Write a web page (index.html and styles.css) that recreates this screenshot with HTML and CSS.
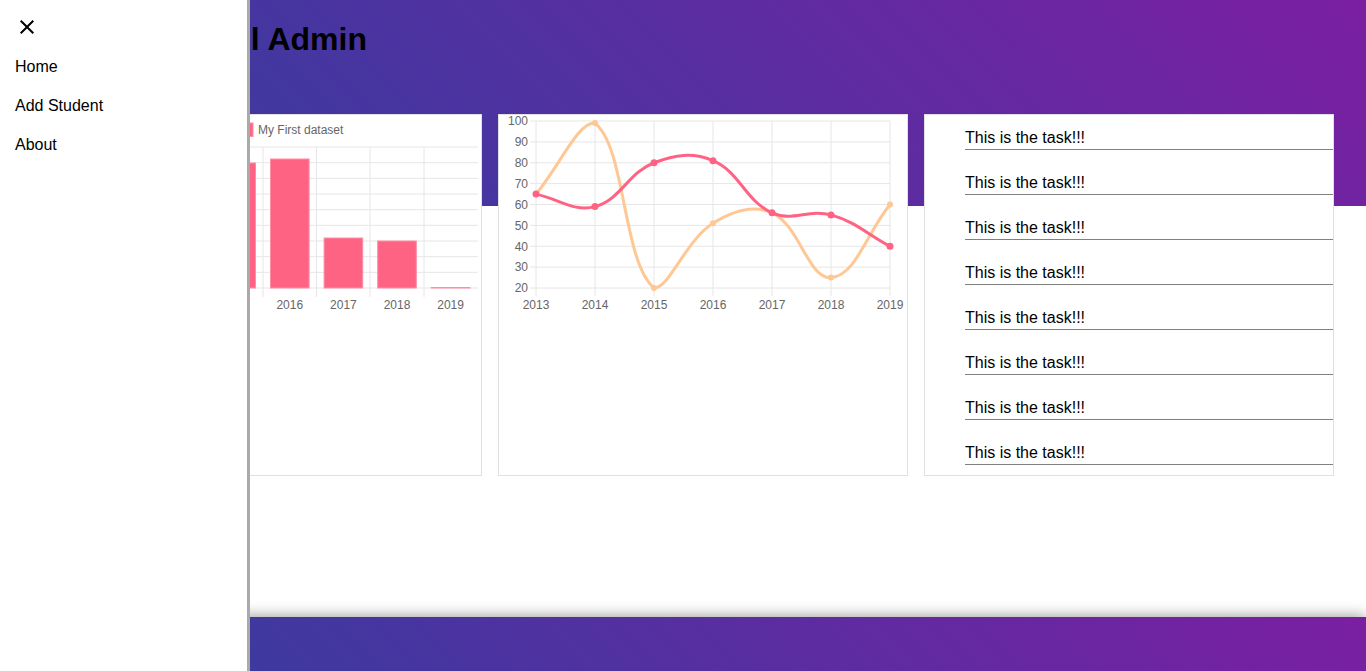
FILE: index.html
```html
<!DOCTYPE html>
<html lang="en">
<head>
<meta charset="utf-8">
<title>School Admin</title>
<link rel="stylesheet" href="styles.css">
</head>
<body>
<div class="app">
  <header class="topbar">
    <h1 class="title">School Admin</h1>
  </header>

  <main class="cards">
    <section class="card">
      <svg class="chart" viewBox="73 115 408 204" width="408" height="204">
        <g class="grid">
          <line x1="96" y1="147" x2="478" y2="147"/>
          <line x1="96" y1="162.67" x2="478" y2="162.67"/>
          <line x1="96" y1="178.33" x2="478" y2="178.33"/>
          <line x1="96" y1="194" x2="478" y2="194"/>
          <line x1="96" y1="209.67" x2="478" y2="209.67"/>
          <line x1="96" y1="225.33" x2="478" y2="225.33"/>
          <line x1="96" y1="241" x2="478" y2="241"/>
          <line x1="96" y1="256.67" x2="478" y2="256.67"/>
          <line x1="96" y1="272.33" x2="478" y2="272.33"/>
          <line x1="96" y1="288" x2="478" y2="288"/>
          <line x1="102.5" y1="147" x2="102.5" y2="297"/>
          <line x1="156" y1="147" x2="156" y2="297"/>
          <line x1="209.5" y1="147" x2="209.5" y2="297"/>
          <line x1="263" y1="147" x2="263" y2="297"/>
          <line x1="316.5" y1="147" x2="316.5" y2="297"/>
          <line x1="370" y1="147" x2="370" y2="297"/>
          <line x1="424" y1="147" x2="424" y2="297"/>
        </g>
        <g class="bars">
          <rect x="109.9" y="186" width="38.6" height="102"/>
          <rect x="163.5" y="195.5" width="38.6" height="92.5"/>
          <rect x="216.9" y="163" width="38.6" height="125"/>
          <rect x="270.5" y="159" width="38.6" height="129"/>
          <rect x="324.1" y="238" width="38.6" height="50"/>
          <rect x="377.7" y="241" width="38.6" height="47"/>
          <rect x="431.3" y="287.5" width="38.6" height="0.5"/>
        </g>
        <g class="tick">
          <text x="129" y="308.5" text-anchor="middle">2013</text>
          <text x="182.6" y="308.5" text-anchor="middle">2014</text>
          <text x="236.2" y="308.5" text-anchor="middle">2015</text>
          <text x="289.8" y="308.5" text-anchor="middle">2016</text>
          <text x="343.4" y="308.5" text-anchor="middle">2017</text>
          <text x="397" y="308.5" text-anchor="middle">2018</text>
          <text x="450.6" y="308.5" text-anchor="middle">2019</text>
        </g>
        <rect class="legend-box" x="213" y="123" width="40" height="13.5"/>
        <text class="tick" x="258" y="133.5">My First dataset</text>
      </svg>
    </section>

    <section class="card">
      <svg class="chart" viewBox="499 115 408 204" width="408" height="204">
        <g class="grid">
          <line x1="530" y1="121" x2="890" y2="121"/>
          <line x1="530" y1="141.9" x2="890" y2="141.9"/>
          <line x1="530" y1="162.75" x2="890" y2="162.75"/>
          <line x1="530" y1="183.6" x2="890" y2="183.6"/>
          <line x1="530" y1="204.5" x2="890" y2="204.5"/>
          <line x1="530" y1="225.4" x2="890" y2="225.4"/>
          <line x1="530" y1="246.25" x2="890" y2="246.25"/>
          <line x1="530" y1="267.1" x2="890" y2="267.1"/>
          <line x1="530" y1="288" x2="890" y2="288"/>
          <line x1="536" y1="121" x2="536" y2="296"/>
          <line x1="595" y1="121" x2="595" y2="296"/>
          <line x1="654" y1="121" x2="654" y2="296"/>
          <line x1="713" y1="121" x2="713" y2="296"/>
          <line x1="772" y1="121" x2="772" y2="296"/>
          <line x1="831" y1="121" x2="831" y2="296"/>
          <line x1="890" y1="121" x2="890" y2="296"/>
        </g>
        <g class="tick">
          <text x="528" y="125.3" text-anchor="end">100</text>
          <text x="528" y="146.2" text-anchor="end">90</text>
          <text x="528" y="167" text-anchor="end">80</text>
          <text x="528" y="187.9" text-anchor="end">70</text>
          <text x="528" y="208.8" text-anchor="end">60</text>
          <text x="528" y="229.7" text-anchor="end">50</text>
          <text x="528" y="250.5" text-anchor="end">40</text>
          <text x="528" y="271.4" text-anchor="end">30</text>
          <text x="528" y="292.3" text-anchor="end">20</text>
          <text x="536" y="308.5" text-anchor="middle">2013</text>
          <text x="595" y="308.5" text-anchor="middle">2014</text>
          <text x="654" y="308.5" text-anchor="middle">2015</text>
          <text x="713" y="308.5" text-anchor="middle">2016</text>
          <text x="772" y="308.5" text-anchor="middle">2017</text>
          <text x="831" y="308.5" text-anchor="middle">2018</text>
          <text x="890" y="308.5" text-anchor="middle">2019</text>
        </g>
        <path class="line-orange" d="M536,194.1 C559.6,165.7 578.7,121 595,123.1 C625.9,147.7 622.5,261.3 654,288 C669.7,288 685,241.15 713,223.3 C732.2,211.1 752.8,204 772,212.85 C800,225.75 808.2,279.2 831,277.6 C855.4,275.9 866.4,233.7 890,204.5"/>
        <g class="pts-orange">
          <circle cx="536" cy="194.1" r="3"/>
          <circle cx="595" cy="123.1" r="3"/>
          <circle cx="654" cy="288" r="3"/>
          <circle cx="713" cy="223.3" r="3"/>
          <circle cx="772" cy="212.85" r="3"/>
          <circle cx="831" cy="277.6" r="3"/>
          <circle cx="890" cy="204.5" r="3"/>
        </g>
        <path class="line-red" d="M536,194.1 C559.6,199.1 573.7,212.25 595,206.6 C620.9,199.7 627.8,172.9 654,162.75 C675,154.6 692.8,152.1 713,160.7 C740,172.15 745,200.5 772,212.85 C792.2,222.1 808.9,208.6 831,214.9 C856.1,222 866.4,233.7 890,246.25"/>
        <g class="pts-red">
          <circle cx="536" cy="194.1" r="3.5"/>
          <circle cx="595" cy="206.6" r="3.5"/>
          <circle cx="654" cy="162.75" r="3.5"/>
          <circle cx="713" cy="160.7" r="3.5"/>
          <circle cx="772" cy="212.85" r="3.5"/>
          <circle cx="831" cy="214.9" r="3.5"/>
          <circle cx="890" cy="246.25" r="3.5"/>
        </g>
      </svg>
    </section>

    <section class="card">
      <ul class="tasks">
        <li>This is the task!!!</li>
        <li>This is the task!!!</li>
        <li>This is the task!!!</li>
        <li>This is the task!!!</li>
        <li>This is the task!!!</li>
        <li>This is the task!!!</li>
        <li>This is the task!!!</li>
        <li>This is the task!!!</li>
      </ul>
    </section>
  </main>

  <footer class="footer"></footer>
</div>

<aside class="drawer">
  <button class="close" type="button" aria-label="Close">
    <svg viewBox="0 0 24 24" width="24" height="24"><path d="M19 6.41L17.59 5 12 10.59 6.41 5 5 6.41 10.59 12 5 17.59 6.41 19 12 13.41 17.59 19 19 17.59 13.41 12z"/></svg>
  </button>
  <nav class="menu">
    <a href="#">Home</a>
    <a href="#">Add Student</a>
    <a href="#">About</a>
  </nav>
</aside>
</body>
</html>
```

FILE: styles.css
```css
html, body {
  margin: 0;
  height: 100%;
}

body {
  font-family: "Liberation Sans", Arial, sans-serif;
  background: #fff;
  color: #000;
  overflow: hidden;
}

.app {
  display: flex;
  flex-direction: column;
  min-height: 100vh;
}

.topbar {
  height: 206px;
  box-sizing: border-box;
  padding: 21px 0 0 153px;
  background: linear-gradient(45deg, #303f9f, #7b1fa2);
}

.title {
  margin: 0;
  font-size: 32px;
  line-height: 37px;
  font-weight: bold;
  color: #000;
}

.cards {
  display: grid;
  grid-template-columns: repeat(3, 410px);
  gap: 16px;
  padding-left: 72px;
  margin-top: -92px;
}

.card {
  height: 362px;
  box-sizing: border-box;
  border: 1px solid #e0e0e0;
  background: #fff;
}

.chart {
  display: block;
  width: 408px;
  height: 204px;
}

.grid line {
  stroke: #e6e6e6;
  stroke-width: 1;
}

.tick {
  font-family: "Liberation Sans", Arial, sans-serif;
  font-size: 12px;
  fill: #666;
}

.bars rect {
  fill: #ff6384;
  stroke: #ff8ea5;
  stroke-width: 1;
}

.legend-box {
  fill: #ff6384;
  stroke: #ff8ea5;
  stroke-width: 1;
}

.line-orange {
  fill: none;
  stroke: #ffc794;
  stroke-width: 3;
}

.pts-orange circle {
  fill: #ffc794;
}

.line-red {
  fill: none;
  stroke: #ff6384;
  stroke-width: 3;
}

.pts-red circle {
  fill: #ff6384;
}

.tasks {
  list-style: none;
  margin: 0;
  padding: 14px 0 0 40px;
  display: flex;
  flex-direction: column;
  gap: 24px;
}

.tasks li {
  font-size: 16px;
  line-height: 18px;
  padding-bottom: 2px;
  border-bottom: 1px solid #808080;
  color: #000;
}

.footer {
  margin-top: auto;
  height: 54px;
  flex-shrink: 0;
  background: linear-gradient(45deg, #303f9f, #7b1fa2);
  box-shadow: 0 0 14px rgba(0, 0, 0, 0.45);
}

.drawer {
  position: fixed;
  top: 0;
  left: 0;
  bottom: 0;
  width: 247px;
  padding-top: 15px;
  background: #fff;
  border-right: 3px solid #aaa;
}

.close {
  display: block;
  width: 24px;
  height: 24px;
  margin: 0 0 8px 15px;
  padding: 0;
  border: 0;
  background: none;
  cursor: pointer;
}

.close svg {
  display: block;
  fill: #000;
}

.menu a {
  display: block;
  padding: 10px 15px;
  font-size: 16px;
  line-height: 19px;
  color: #000;
  text-decoration: none;
}
```
